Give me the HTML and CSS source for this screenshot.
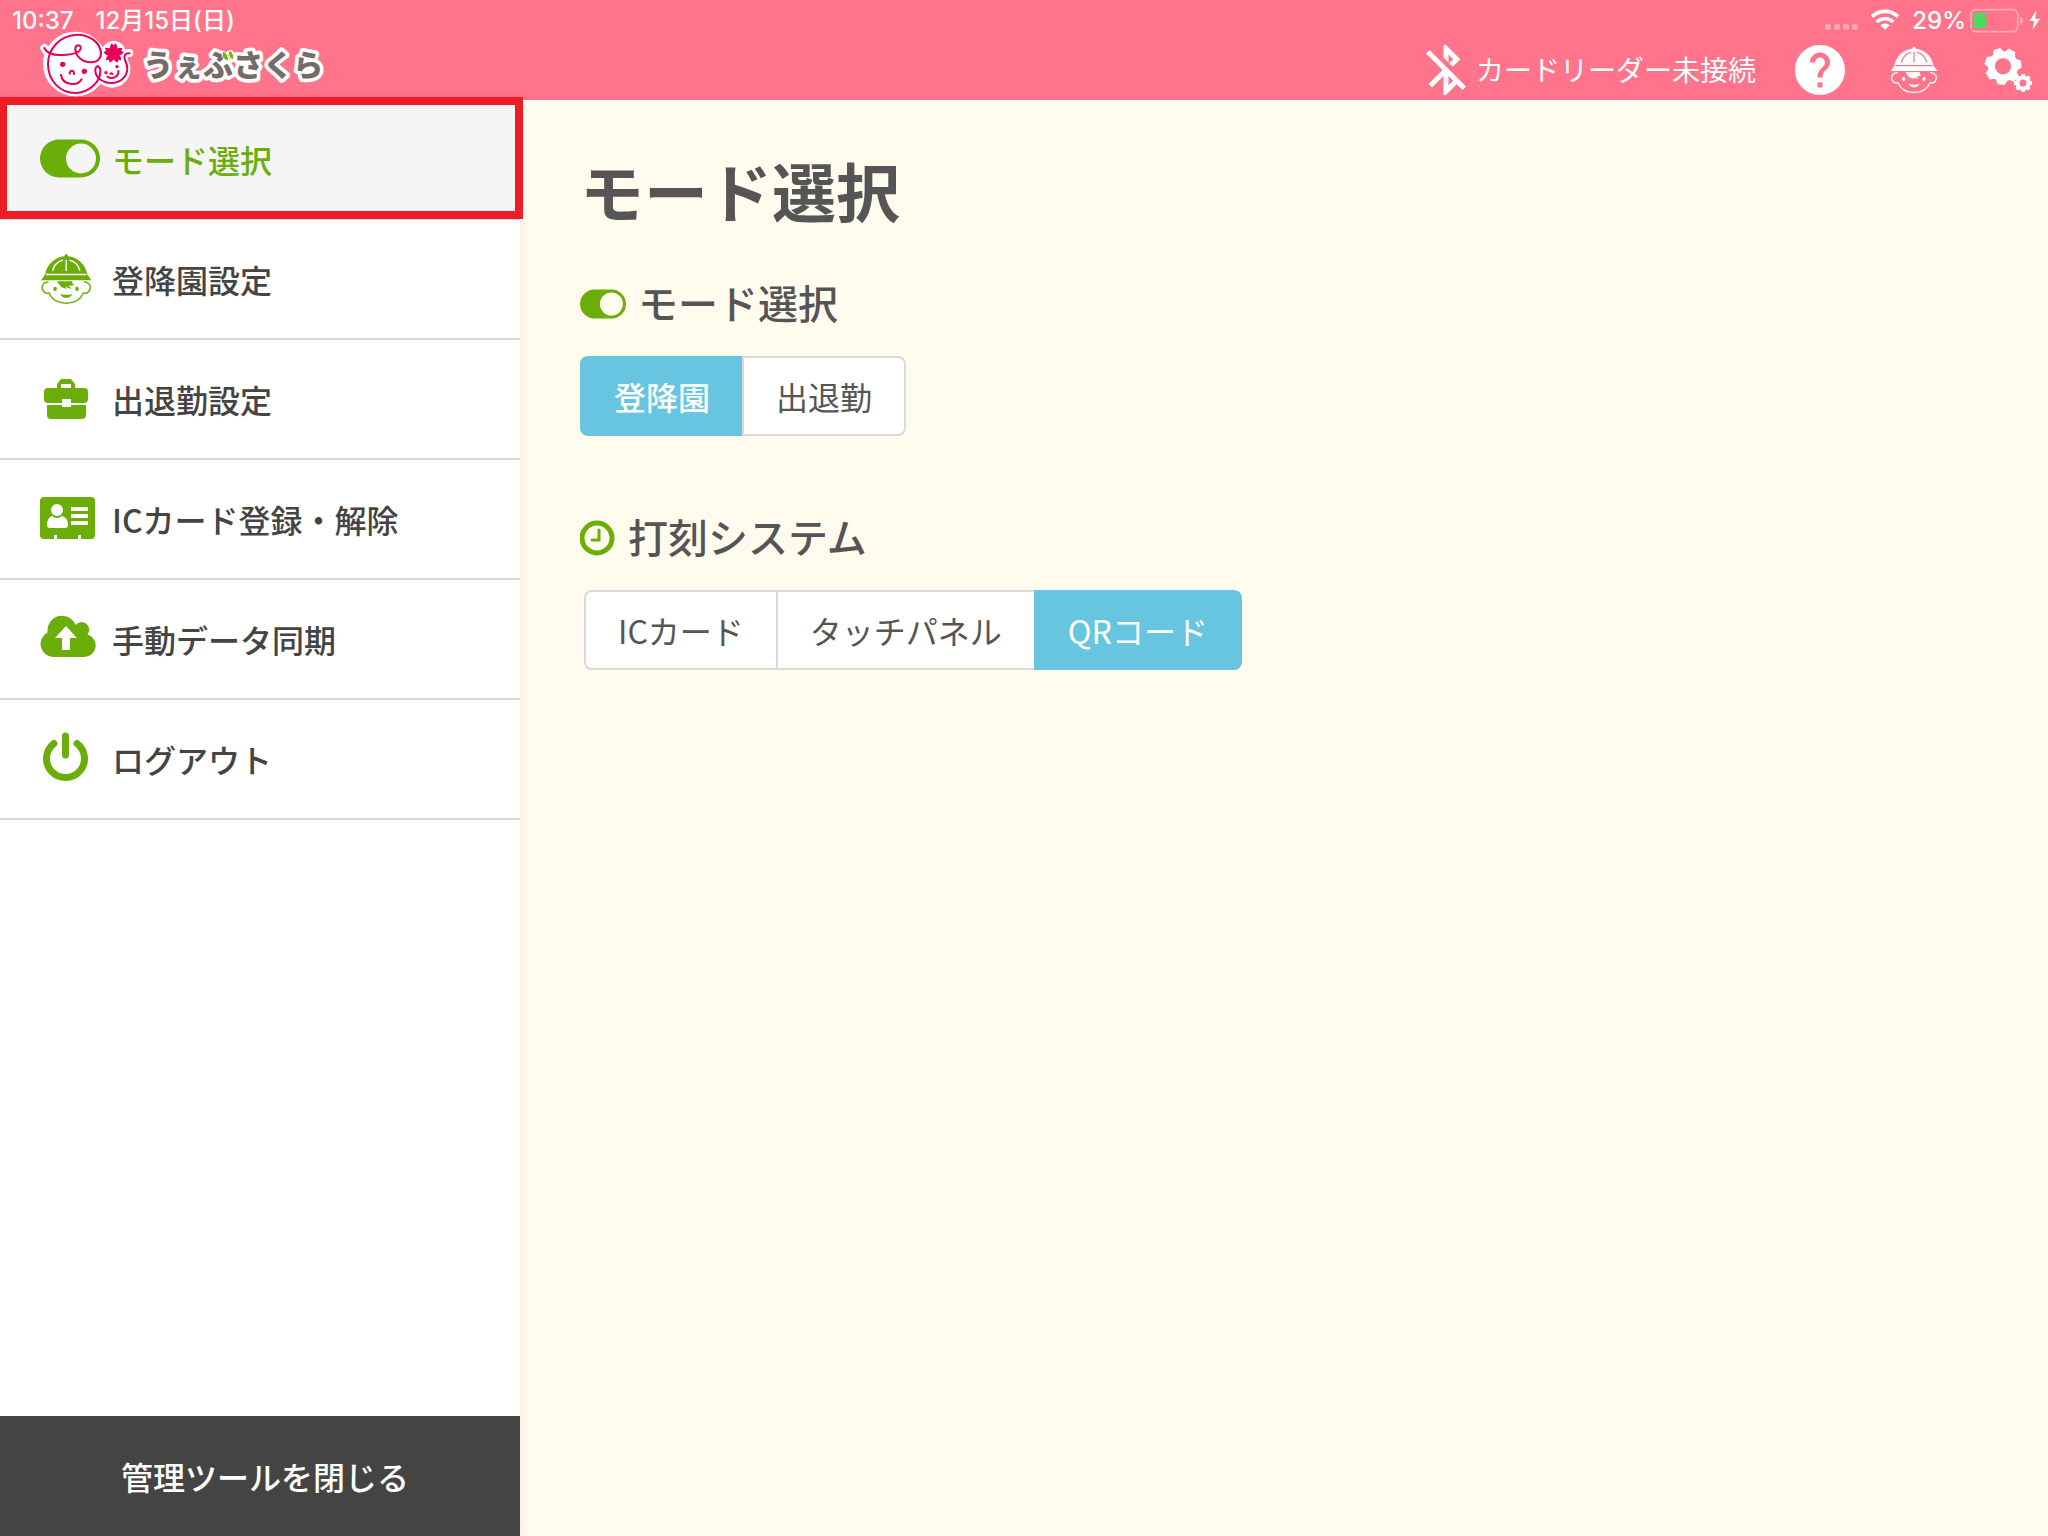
FILE: index.html
```html
<!DOCTYPE html>
<html lang="ja">
<head>
<meta charset="utf-8">
<meta name="viewport" content="width=device-width, initial-scale=1">
<title>モード選択 | うぇぶさくら</title>
<link rel="stylesheet" href="styles.css">
</head>
<body>
<svg class="sprite" aria-hidden="true">
  <symbol id="toggle" viewBox="0 0 60 38">
    <path fill="currentColor" fill-rule="evenodd" d="M19 0H41A19 19 0 0 1 41 38H19A19 19 0 0 1 19 0ZM41 4A15 15 0 0 0 41 34A15 15 0 0 0 41 4Z"/>
  </symbol>
  <g id="kid">
    <path fill="currentColor" d="M403 198C408 166 433 148 457 146Q458 140 462 140Q466 140 467 146C491 148 516 166 521 198L523 200L532 213H392L401 200Z"/>
    <g class="kid-lines">
      <path d="M462 156V187"/>
      <path d="M424 187C427 173 438 161 453 157"/>
      <path d="M500 187C497 173 486 161 471 157"/>
      <path d="M406 197H518"/>
    </g>
    <path fill="none" stroke="currentColor" stroke-width="4" stroke-linecap="round" d="M411 218C398 218 392 230 396 239C400 248 408 250 414 248C422 268 441 277 462 277C483 277 502 268 510 248C516 250 524 248 528 239C532 230 526 218 513 218"/>
    <path fill="currentColor" d="M437 216H480Q476 222 484 225Q477 231 469 227Q471 233 477 235Q468 238 460 230Q461 235 464 237Q444 235 437 216Z"/>
    <ellipse cx="431" cy="237" rx="5" ry="6" fill="currentColor"/>
    <ellipse cx="492" cy="237" rx="5" ry="6" fill="currentColor"/>
    <path fill="currentColor" d="M445 251Q462 256 479 251Q473 262 462 262Q451 262 445 251Z"/>
  </g>
</svg>

<header class="header">
  <div class="status">
    <time>10:37</time>
    <span class="status-date">12月15日(日)</span>
    <svg class="status-icons" width="76" height="40" viewBox="192 3 228 120" aria-hidden="true">
      <g fill="#fff" opacity=".35">
        <rect x="195" y="72" width="18" height="18" rx="5"/><rect x="222" y="72" width="18" height="18" rx="5"/><rect x="249" y="72" width="18" height="18" rx="5"/><rect x="276" y="72" width="18" height="18" rx="5"/>
      </g>
      <g fill="none" stroke="#fff" stroke-width="11">
        <path d="M336 50A56 56 0 0 1 414 50"/><path d="M350 66A37 37 0 0 1 400 66"/>
      </g>
      <path fill="#fff" d="M375 90L361 76A20 20 0 0 1 389 76Z"/>
    </svg>
    <span class="battery-text">29%</span>
    <svg width="72" height="40" viewBox="629 3 216 120" aria-hidden="true">
      <rect x="632" y="29" width="140" height="66" rx="14" fill="none" stroke="#fff" stroke-opacity=".4" stroke-width="5"/>
      <path d="M779 50Q789 54 789 62T779 74Z" fill="#fff" opacity=".4"/>
      <rect x="641" y="39" width="37" height="45" rx="3" fill="#4cd964"/>
      <path d="M828 31L807 63H821L817 90L839 56H825Z" fill="#fff"/>
    </svg>
  </div>
  <div class="bar">
    <a class="logo" href="#" aria-label="うぇぶさくら">
      <svg width="290" height="70" viewBox="120 90 870 210">
        <g stroke="#fff" stroke-width="24" stroke-linecap="round" stroke-linejoin="round">
          <circle cx="226" cy="192" r="85" fill="#fff"/>
          <circle cx="336" cy="208" r="43" fill="#fff"/>
          <circle cx="341" cy="159" r="24" fill="#fff"/>
          <path fill="none" d="M133 144C140 158 152 166 170 165M388 159Q372 160 372 174"/>
        </g>
        <g fill="none" stroke="#e6005c" stroke-width="6" stroke-linecap="round" stroke-linejoin="round">
          <path d="M133 144C142 164 163 166 186 165C213 164 241 160 242 144C242 132 225 133 226 149C228 170 247 186 272 187C293 188 304 174 303 158C300 126 267 104 232 104C181 105 144 146 144 192C144 243 181 279 226 279C268 279 300 245 301 215C302 199 289 192 286 208C284 231 307 249 334 249C362 249 381 230 382 206C382 194 378 187 375 180C370 168 374 160 389 160"/>
          <path d="M183 225C187 255 232 261 245 238M209 221C209 209 223 210 222 222"/>
          <path d="M322 230C338 240 357 229 355 213M331 221Q335 218 337 222"/>
        </g>
        <g fill="#e6005c">
          <circle cx="188" cy="193" r="8"/><circle cx="253" cy="214" r="8"/>
          <circle cx="318" cy="218" r="5"/><circle cx="351" cy="200" r="5"/>
          <g transform="translate(341 160)">
            <path id="petal" d="M0 3C-14 -8 -13 -20 -6 -30L0 -24L6 -30C13 -20 14 -8 0 3Z"/>
            <use href="#petal" transform="rotate(72)"/><use href="#petal" transform="rotate(144)"/><use href="#petal" transform="rotate(216)"/><use href="#petal" transform="rotate(288)"/>
          </g>
        </g>
        <text class="logo-text" x="430" y="229">うぇぶさくら</text>
        <g fill="#6cb61a" stroke="#fff" stroke-width="3">
          <path d="M667 170Q665 158 670 153Q686 162 686 183Q672 182 667 170Z"/>
          <path d="M685 160Q687 153 691 151Q705 165 700 180Q687 176 685 160Z"/>
        </g>
      </svg>
    </a>
    <div class="reader">
      <svg class="icon" viewBox="0 0 24 24" aria-hidden="true"><path fill="currentColor" d="M13 5.830l1.880 1.880-1.600 1.600 1.410 1.410 3.020-3.020L12 2h-1v5.030l2 2v-3.200zM5.410 4L4 5.410 10.590 12 5 17.590 6.410 19 11 14.410V22h1l4.290-4.290 2.300 2.290L20 18.590 5.410 4zM13 18.170v-3.760l1.880 1.880L13 18.170z"/></svg>
      <span>カードリーダー未接続</span>
    </div>
    <button class="icon-button" type="button" aria-label="ヘルプ">
      <svg class="icon" viewBox="0 0 24 24"><path fill="currentColor" d="M12 2C6.480 2 2 6.480 2 12s4.480 10 10 10 10-4.480 10-10S17.520 2 12 2zm1 17h-2v-2h2v2zm2.070-7.750l-.9.920C13.450 12.900 13 13.500 13 15h-2v-.5c0-1.100.45-2.100 1.170-2.830l1.240-1.260c.37-.36.59-.86.59-1.410 0-1.100-.9-2-2-2s-2 .9-2 2H8c0-2.210 1.790-4 4-4s4 1.790 4 4c0 .88-.36 1.680-.93 2.250z"/></svg>
    </button>
    <button class="icon-button" type="button" aria-label="登降園">
      <svg class="icon" viewBox="372 120 180 180"><use href="#kid"/></svg>
    </button>
    <button class="icon-button" type="button" aria-label="設定">
      <svg class="icon" viewBox="654 120 180 180">
        <g transform="translate(729 199)">
          <circle r="35" fill="none" stroke="currentColor" stroke-width="21"/>
          <g fill="currentColor" stroke="currentColor" stroke-width="4" stroke-linejoin="round">
            <path d="M-15 -40L-10 -53H10L15 -40Z" transform="rotate(30)"/>
            <path id="tooth" d="M-15 -40L-10 -53H10L15 -40Z" transform="rotate(-20)"/>
            <use href="#tooth" transform="rotate(103)"/><use href="#tooth" transform="rotate(154)"/><use href="#tooth" transform="rotate(206)"/><use href="#tooth" transform="rotate(257)"/><use href="#tooth" transform="rotate(309)"/>
          </g>
        </g>
        <g transform="translate(789 249)">
          <circle r="16" fill="none" stroke="currentColor" stroke-width="11"/>
          <g fill="currentColor">
            <path id="small-tooth" d="M-8 -19L-5 -27H5L8 -19Z"/>
            <use href="#small-tooth" transform="rotate(45)"/><use href="#small-tooth" transform="rotate(90)"/><use href="#small-tooth" transform="rotate(135)"/><use href="#small-tooth" transform="rotate(180)"/><use href="#small-tooth" transform="rotate(225)"/><use href="#small-tooth" transform="rotate(270)"/><use href="#small-tooth" transform="rotate(315)"/>
          </g>
        </g>
      </svg>
    </button>
  </div>
</header>

<div class="layout">
  <aside class="sidebar">
    <nav class="menu" aria-label="管理メニュー">
      <a class="menu-item is-current" href="#mode" aria-current="page">
        <svg class="icon" aria-hidden="true"><use href="#toggle" width="60" height="59"/></svg>
        <span>モード選択</span>
      </a>
      <a class="menu-item" href="#attendance">
        <svg class="icon" viewBox="389 126 167 167" aria-hidden="true"><use href="#kid"/></svg>
        <span>登降園設定</span>
      </a>
      <a class="menu-item" href="#work">
        <svg class="icon" viewBox="0 0 60 60" aria-hidden="true">
          <path fill="currentColor" fill-rule="evenodd" d="M17 19V15L21 10H31L35 15V19H44Q48 19 48 23V30Q48 34 44 34H31V30H22V34H8Q4 34 4 30V23Q4 19 8 19ZM21 19H31V15H21Z"/>
          <path fill="currentColor" d="M7 36H22V38H31V36H46V46Q46 50 42 50H11Q7 50 7 46Z"/>
        </svg>
        <span>出退勤設定</span>
      </a>
      <a class="menu-item" href="#card">
        <svg class="icon" viewBox="0 0 60 60" aria-hidden="true">
          <path fill="currentColor" d="M4 8H51Q55 8 55 12V46Q55 50 51 50H41V46H38V50H17V46H14V50H4Q0 50 0 46V12Q0 8 4 8Z"/>
          <g fill="#fff"><circle cx="17" cy="21" r="6"/><path d="M12 27Q17 31 22 27Q28 29 28 36Q28 39 25 39H10Q7 39 7 36Q7 29 12 27Z"/><path d="M31 18H48V22H31ZM31 25H48V29H31ZM31 32H48V36H31Z"/></g>
        </svg>
        <span>ICカード登録・解除</span>
      </a>
      <a class="menu-item" href="#sync">
        <svg class="icon" viewBox="0 0 60 60" aria-hidden="true">
          <path fill="currentColor" fill-rule="evenodd" d="M13 48A13 13 0 0 1 7.500 23.500V22A14.500 14.500 0 0 1 35.500 16A7.500 7.500 0 0 1 47.500 25.500A11.500 11.500 0 0 1 44.500 48ZM26 17L15 29H22V41H30V29H37Z"/>
        </svg>
        <span>手動データ同期</span>
      </a>
      <a class="menu-item" href="#logout">
        <svg class="icon" viewBox="0 0 60 60" aria-hidden="true">
          <path fill="none" stroke="currentColor" stroke-width="7" stroke-linecap="round" d="M14 14.500A19 19 0 1 0 37 14.500M25.500 7V26"/>
        </svg>
        <span>ログアウト</span>
      </a>
    </nav>
    <button class="close-button" type="button">管理ツールを閉じる</button>
  </aside>

  <main class="content" id="mode">
    <h1>モード選択</h1>
    <section>
      <h2><svg width="46" height="30" aria-hidden="true"><use href="#toggle"/></svg>モード選択</h2>
      <div class="segments" role="group" aria-label="モード選択">
        <button class="segment is-on" type="button" aria-pressed="true">登降園</button>
        <button class="segment" type="button" aria-pressed="false">出退勤</button>
      </div>
    </section>
    <section>
      <h2><svg width="36" height="36" viewBox="0 0 36 36" aria-hidden="true"><circle cx="17" cy="18" r="15" fill="none" stroke="currentColor" stroke-width="5"/><path d="M19 10V20H12" fill="none" stroke="currentColor" stroke-width="3" stroke-linecap="round"/></svg>打刻システム</h2>
      <div class="segments segments-system" role="group" aria-label="打刻システム">
        <button class="segment" type="button" aria-pressed="false">ICカード</button>
        <button class="segment" type="button" aria-pressed="false">タッチパネル</button>
        <button class="segment is-on" type="button" aria-pressed="true">QRコード</button>
      </div>
    </section>
  </main>
</div>
</body>
</html>
```

FILE: styles.css
```css
:root {
  --pink: #ff738b;
  --green: #6bae0a;
  --blue: #68c5df;
  --line: #dadada;
}

* {
  box-sizing: border-box;
}

body {
  display: flex;
  flex-direction: column;
  min-height: 100vh;
  margin: 0;
  background: #fffcee;
  color: #555;
  font-family: "Noto Sans CJK JP", sans-serif;
}

a {
  color: inherit;
  text-decoration: none;
}

button {
  border: 0;
  padding: 0;
  background: none;
  color: inherit;
  font: inherit;
  cursor: pointer;
}

svg {
  display: block;
  flex: none;
}

.sprite {
  position: absolute;
  width: 0;
  height: 0;
}

.icon {
  width: 60px;
  height: 60px;
}

.kid-lines {
  fill: none;
  stroke: var(--icon-bg);
  stroke-width: 4;
}

/* Header */
.header {
  --icon-bg: var(--pink);
  background: var(--pink);
  color: #fff;
}

.status {
  display: flex;
  align-items: center;
  height: 40px;
  padding: 2px 6px 0 12px;
  font: 500 24px/40px Inter, "Noto Sans CJK JP", sans-serif;
}

.status-date {
  margin-left: 22px;
}

.status-icons {
  margin-left: auto;
}

.battery-text {
  margin: 0 4px 0 12px;
}

.bar {
  display: flex;
  align-items: center;
  gap: 34px;
  height: 60px;
  padding: 0 10px 0 40px;
}

.logo {
  align-self: flex-end;
  margin-right: auto;
}

.logo-text {
  fill: #736c68;
  stroke: #fff;
  stroke-width: 22px;
  stroke-linejoin: round;
  paint-order: stroke;
  font-size: 90px;
  font-weight: 900;
}

.reader {
  display: flex;
  align-items: center;
  font-size: 28px;
}

.reader span {
  padding-bottom: 2px;
}

/* Sidebar */
.layout {
  display: flex;
  flex: 1;
}

.sidebar {
  --icon-bg: #fff;
  display: flex;
  flex: none;
  flex-direction: column;
  justify-content: space-between;
  width: 520px;
  background: #fff;
  box-shadow: 0 0 12px rgba(0, 0, 0, .08);
}

.menu-item {
  position: relative;
  display: flex;
  align-items: center;
  gap: 12px;
  height: 120px;
  padding-left: 40px;
  border-bottom: 2px solid var(--line);
  color: #444;
  font-size: 32px;
  font-weight: 500;
}

.menu-item .icon {
  color: var(--green);
}

.menu-item.is-current {
  background: #f5f5f5;
  color: var(--green);
}

/* Highlight frame that overlaps the neighbouring areas */
.menu-item.is-current::after {
  content: "";
  position: absolute;
  inset: -3px -3px -1px -1px;
  border: 8px solid #ee1c25;
}

.close-button {
  height: 120px;
  padding-left: 10px;
  background: #444;
  color: #fff;
  font-size: 32px;
  font-weight: 500;
}

/* Content */
.content {
  flex: 1;
  padding: 57px 60px;
}

h1 {
  margin: 0 0 51px;
  font-size: 64px;
  font-weight: 700;
  line-height: 64px;
}

h2 {
  display: flex;
  align-items: center;
  gap: 12px;
  margin: 0 0 24px;
  font-size: 40px;
  font-weight: 500;
  line-height: 60px;
}

h2 svg {
  margin-top: 4px;
  color: var(--green);
}

section + section {
  margin-top: 70px;
}

.segments {
  display: flex;
}

.segments-system {
  margin-left: 4px;
}

.segment {
  height: 80px;
  padding: 0 32px;
  border: 2px solid var(--line);
  border-right-width: 0;
  background: #fff;
  font-size: 32px;
}

.segment:first-child {
  border-radius: 8px 0 0 8px;
}

.segment:last-child {
  border-right-width: 2px;
  border-radius: 0 8px 8px 0;
}

.segment.is-on {
  border-color: var(--blue);
  background: var(--blue);
  color: #fff;
}

.segment.is-on:first-child {
  font-weight: 500;
}
```
